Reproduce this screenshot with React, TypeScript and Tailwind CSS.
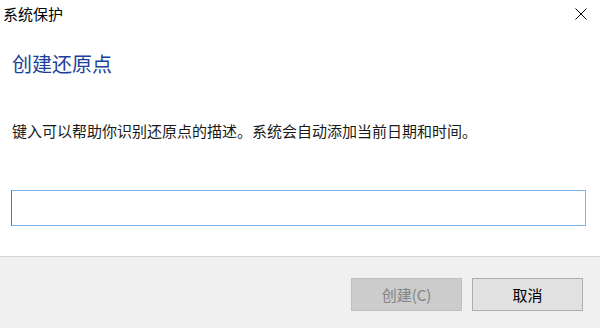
import React from "react";

export default function App() {
  const font = { fontFamily: '"Noto Sans CJK SC", "Noto Sans", sans-serif' };
  return (
    <div className="w-[600px] h-[328px] bg-white flex flex-col overflow-hidden" style={font}>
      <div className="h-[28px] flex items-center justify-between pl-[3px] pr-[13px]">
        <span className="text-[15px] leading-[20px] text-black">系统保护</span>
        <svg width="12" height="12" viewBox="0 0 12 12" className="block">
          <path d="M0.5 0.5 L11.5 11.5 M11.5 0.5 L0.5 11.5" stroke="#000" strokeWidth="1" fill="none" />
        </svg>
      </div>
      <div className="flex-1 flex flex-col px-[11px]">
        <div className="mt-[22px] pl-[1px] text-[20px] leading-[28px] text-[#1c3f9a]">创建还原点</div>
        <div className="mt-[43px] pl-[1px] text-[15px] leading-[20px] text-[#1a1a1a]">
          键入可以帮助你识别还原点的描述。系统会自动添加当前日期和时间。
        </div>
        <div className="mt-[49px] h-[36px] w-[575px] border border-[#7eb4ea] border-l-[#3c7fb1] bg-white"></div>
      </div>
      <div className="h-[72px] border-t border-[#d4d4d4] bg-[#f0f0f0] flex justify-end items-start pt-[21px] pr-[17px] gap-[10px]">
        <button className="w-[111px] h-[33px] bg-[#cccccc] border border-[#bfbfbf] text-[#838383] text-[15px] leading-[20px] flex items-center justify-center">
          创建(C)
        </button>
        <button className="w-[111px] h-[33px] bg-[#e1e1e1] border border-[#adadad] text-black text-[15px] leading-[20px] flex items-center justify-center">
          取消
        </button>
      </div>
    </div>
  );
}
